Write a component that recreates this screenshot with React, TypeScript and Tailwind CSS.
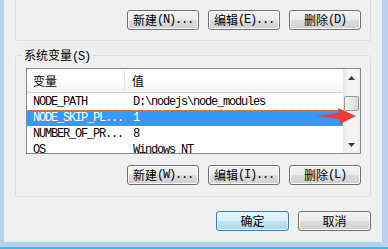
import React from "react";

const btn =
  "h-[20px] w-[72px] rounded-[3px] border border-[#707070] bg-[linear-gradient(#f2f2f2,#ebebeb_50%,#dddddd_50%,#cfcfcf)] flex items-center justify-center text-black shadow-[inset_0_0_0_1px_#fcfcfc]";
const mono = "font-['Liberation_Mono',monospace] text-[12px] tracking-[-1.2px]";

function Btn({ cn, ascii, wide }: { cn: string; ascii?: string; wide?: boolean }) {
  return (
    <div className={wide ? btn.replace("w-[72px]", "w-[73px]") : btn}>
      <span>{cn}</span>
      {ascii && <span className={mono}>{ascii}</span>}
    </div>
  );
}

const rows = [
  { name: "NODE_PATH", value: "D:\\nodejs\\node_modules" },
  { name: "NODE_SKIP_PL...", value: "1", selected: true },
  { name: "NUMBER_OF_PR...", value: "8" },
  { name: "OS", value: "Windows_NT" },
];

function Tri({ down }: { down?: boolean }) {
  return (
    <svg width="7" height="4" viewBox="0 0 7 4">
      <polygon points={down ? "0,0 7,0 3.5,4" : "3.5,0 7,4 0,4"} fill="#3a3a3a" />
    </svg>
  );
}

export default function App() {
  return (
    <div className="w-[388px] h-[249px] bg-[#b9d1ea] flex flex-col overflow-hidden font-['Noto_Sans_CJK_SC',sans-serif] text-[12px] leading-[14px] text-black">
      <div className="flex-1 pl-[4px] pr-[6px] pb-[5px] flex">
        <div className="flex-1 bg-[#f0f0f0] flex flex-col">
          {/* 用户变量 (cut off) */}
          <div className="ml-[11px] w-[356px] h-[41px] border-x border-b border-[#d5dfe5] rounded-b-[3px] flex justify-end gap-[9px] pt-[10px] pr-[9px]">
            <Btn cn="新建" ascii="(N)..." />
            <Btn cn="编辑" ascii="(E)..." />
            <Btn cn="删除" ascii="(D)" />
          </div>

          {/* 系统变量 */}
          <div className="relative ml-[11px] mt-[14px] w-[356px] h-[142px] border border-[#d5dfe5] rounded-[3px] pl-[10px] pt-[12px] pr-[9px] flex flex-col">
            <span className="absolute left-[6px] top-[-8px] px-[2px] bg-[#f0f0f0]">
              系统变量<span className={mono}>(S)</span>
            </span>

            <div className="relative w-[335px] h-[86px] border border-[#828790] bg-white flex overflow-hidden">
              <div className="flex-1 flex flex-col">
                <div className="h-[24px] shrink-0 flex border-b border-[#d5d5d5] bg-[linear-gradient(#ffffff,#ffffff_40%,#f3f4f6)]">
                  <div className="w-[98px] pl-[6px] flex items-center border-r border-[#e3e8ee]">变量</div>
                  <div className="flex-1 pl-[7px] flex items-center">值</div>
                </div>
                <div className="mt-[1px] flex flex-col">
                  {rows.map((r) => (
                    <div
                      key={r.name}
                      className={
                        "h-[16px] shrink-0 flex items-center " +
                        (r.selected
                          ? "bg-[#3399ff] text-white border border-dotted border-[#e07a30]"
                          : "border border-transparent")
                      }
                    >
                      <div className={"w-[98px] pl-[5px] whitespace-nowrap " + mono}>{r.name}</div>
                      <div className={"flex-1 pl-[7px] whitespace-nowrap " + mono}>{r.value}</div>
                    </div>
                  ))}
                </div>
              </div>

              {/* scrollbar */}
              <div className="w-[17px] shrink-0 flex flex-col bg-[linear-gradient(90deg,#e6e6e6,#f4f4f4_30%,#f4f4f4_70%,#ececec)]">
                <div className="h-[17px] flex items-center justify-center">
                  <Tri />
                </div>
                <div className="flex-1 pt-[10px] flex justify-center">
                  <div className="w-[15px] h-[15px] rounded-[2px] border border-[#979797] bg-[linear-gradient(90deg,#f3f3f3,#e8e8e8_50%,#d6d6d6)]" />
                </div>
                <div className="h-[17px] flex items-center justify-center">
                  <Tri down />
                </div>
              </div>

              {/* annotation arrow */}
              <svg
                className="absolute left-[288px] top-[38px]"
                width="42"
                height="18"
                viewBox="0 0 42 18"
              >
                <polygon points="1,9 24,6 23,1 41,9 25,17 25,12" fill="#f53636" />
              </svg>
            </div>

            <div className="mt-[11px] flex justify-end gap-[9px]">
              <Btn cn="新建" ascii="(W)..." />
              <Btn cn="编辑" ascii="(I)..." />
              <Btn cn="删除" ascii="(L)" />
            </div>
          </div>

          <div className="mt-[14px] ml-[11px] w-[356px] flex justify-end gap-[9px]">
            <div className="h-[20px] w-[73px] rounded-[3px] border border-[#3c7fb1] bg-[linear-gradient(#eaf6fd,#d9f0fc_50%,#bee6fd_50%,#a7d9f5)] shadow-[inset_0_0_0_1px_#def1fb] flex items-center justify-center">
              确定
            </div>
            <Btn cn="取消" wide />
          </div>
        </div>
      </div>
      <div className="h-[2px] bg-[#29c6ea]" />
    </div>
  );
}
